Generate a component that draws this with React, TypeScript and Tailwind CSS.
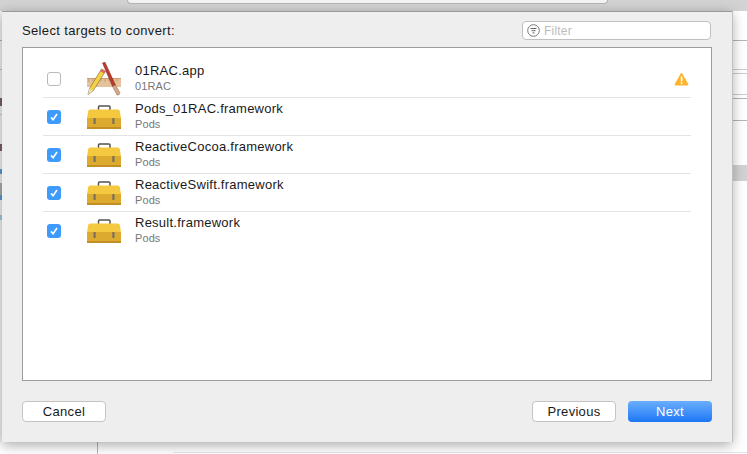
import React from 'react';

const targets = [
  { name: '01RAC.app', group: '01RAC', checked: false, app: true },
  { name: 'Pods_01RAC.framework', group: 'Pods', checked: true },
  { name: 'ReactiveCocoa.framework', group: 'Pods', checked: true },
  { name: 'ReactiveSwift.framework', group: 'Pods', checked: true },
  { name: 'Result.framework', group: 'Pods', checked: true },
];

// bits of the window behind the sheet, top to bottom
const leftEdge = [
  { h: 29, c: 'bg-transparent' }, { h: 1, c: 'bg-[#b5b5b5]' },
  { h: 28, c: 'bg-transparent' }, { h: 1, c: 'bg-[#c4c4c4]' },
  { h: 28, c: 'bg-transparent' }, { h: 8, c: 'bg-[#7d5f70]' },
  { h: 8, c: 'bg-transparent' }, { h: 1, c: 'bg-[#cccccc]' },
  { h: 29, c: 'bg-transparent' }, { h: 7, c: 'bg-[#7d5f70]' },
  { h: 18, c: 'bg-transparent' }, { h: 5, c: 'bg-[#5b9bd5]' },
  { h: 9, c: 'bg-transparent' }, { h: 12, c: 'bg-[#b0b0b0]' },
  { h: 5, c: 'bg-[#5b9bd5]' }, { h: 15, c: 'bg-transparent' },
  { h: 5, c: 'bg-[#a5cdec]' },
];

const rightEdge = [
  { h: 29, c: 'bg-transparent' }, { h: 1, c: 'bg-[#b5b5b5]' },
  { h: 28, c: 'bg-transparent' }, { h: 1, c: 'bg-[#cccccc]' },
  { h: 3, c: 'bg-transparent' }, { h: 1, c: 'bg-[#cccccc]' },
  { h: 20, c: 'bg-transparent' }, { h: 1, c: 'bg-[#cccccc]' },
  { h: 3, c: 'bg-transparent' }, { h: 1, c: 'bg-[#b5b5b5]' },
  { h: 21, c: 'bg-transparent' }, { h: 1, c: 'bg-[#b5b5b5]' },
  { h: 44, c: 'bg-transparent' }, { h: 16, c: 'bg-[#d2d2d2]' },
];

const AppIcon = () => (
  <svg width="34" height="34" viewBox="0 0 34 34" className="block">
    <rect x="0" y="16" width="34" height="9" fill="#e6c29b" />
    <rect x="0" y="16" width="34" height="1" fill="#c99e72" />
    <path d="M2 17v3M6 17v2M10 17v3M14 17v2M18 17v3M22 17v2M26 17v3M30 17v2" stroke="#b98a5c" strokeWidth="0.7" />
    <path d="M1 32.5 L2.5 26.5 L14.5 7 L18.5 9.3 L6 29 Z" fill="#f5d23e" stroke="#6f6149" strokeWidth="0.6" />
    <path d="M1 32.5 L2.5 26.5 L6 29 Z" fill="#eadcc0" />
    <path d="M14.5 7 L18.5 9.3 L17.2 11.5 L13.2 9.2 Z" fill="#e4666a" />
    <path d="M15.5 1 L18 0.3 L28.5 23 L25.5 24.5 Z" fill="#bb3b2f" stroke="#7d2a22" strokeWidth="0.5" />
    <path d="M25.5 24.5 L28.5 23 L33 31 Q32.5 33.5 30 33 Z" fill="#d8a688" stroke="#8a6a55" strokeWidth="0.5" />
  </svg>
);

const ToolboxIcon = () => (
  <svg width="34" height="24" viewBox="0 0 34 24" className="block">
    <path d="M11.5 5V2Q11.5 1 12.5 1H22Q23 1 23 2V5" fill="none" stroke="#55534e" strokeWidth="1.5" />
    <path d="M3 4.5H31Q33 4.5 33 7L34 13.5H0L1 7Q1 4.5 3 4.5Z" fill="#f4c93f" />
    <rect x="0" y="13" width="34" height="10" fill="#dcaa2e" />
    <rect x="0" y="22" width="34" height="2" fill="#c49026" />
    <rect x="6.5" y="13" width="2.2" height="6" rx="0.5" fill="#77705f" />
    <rect x="25.3" y="13" width="2.2" height="6" rx="0.5" fill="#77705f" />
  </svg>
);

const Checkbox = ({ checked }: { checked: boolean }) =>
  checked ? (
    <div className="w-[14px] h-[14px] mt-[1px] rounded-[3px] bg-[#3f9bfb] flex items-center justify-center">
      <svg width="10" height="10" viewBox="0 0 10 10">
        <path d="M2 5.4 L4.1 7.8 L8 2" fill="none" stroke="#fff" strokeWidth="1.6" />
      </svg>
    </div>
  ) : (
    <div className="w-[14px] h-[14px] mt-[1px] rounded-[3px] bg-white border border-[#b9b9b9]" />
  );

export default function App() {
  return (
    <div className="w-[747px] h-[454px] overflow-hidden bg-white flex flex-col font-['Liberation_Sans',sans-serif]">
      <div className="h-[11px] shrink-0 bg-[#d3d3d3] pl-[127px]">
        <div className="w-[481px] h-[4px] bg-[#f4f4f4] border-r border-b border-l border-[#b5b5b5] rounded-b-[4px]" />
      </div>
      <div className="h-[431px] shrink-0 flex">
        <div className="w-[2px] shrink-0 bg-[#f4f4f4] flex flex-col">
          {leftEdge.map((s, i) => (
            <div key={i} className={s.c} style={{ height: s.h }} />
          ))}
        </div>
        <div className="relative z-10 w-[730px] shrink-0 bg-[#eeeeee] border-t border-[#9a9a9a] shadow-[1px_0_0_#c0c0c0,0_3px_12px_rgba(0,0,0,0.35)] px-[20px] flex flex-col">
          <div className="h-[35px] pt-[2px] flex items-center justify-between">
            <span className="mt-[1px] text-[13px] tracking-[0.35px] text-[#1a1a1a]">Select targets to convert:</span>
            <div className="w-[189px] h-[19px] mr-[1px] bg-white border border-[#c0c0c0] rounded-[4px] flex items-center pl-[4px] gap-[4px]">
              <svg width="13" height="13" viewBox="0 0 13 13">
                <circle cx="6.5" cy="6.5" r="5.8" fill="none" stroke="#777" />
                <path d="M3.5 4.5H9.5M4.5 6.7H8.5M5.5 8.9H7.5" stroke="#666" />
              </svg>
              <span className="text-[12px] tracking-[0.2px] text-[#bcbcbc]">Filter</span>
            </div>
          </div>
          <div className="w-[690px] h-[334px] bg-white border border-[#9c9c9c] pt-[12px] pl-[20px] pr-[20px]">
            {targets.map((t, i) => (
              <div key={t.name} className={`h-[38px] pl-[4px] flex items-center border-b ${i < targets.length - 1 ? 'border-[#e3e3e3]' : 'border-transparent'}`}>
                <div className="w-[40px]"><Checkbox checked={t.checked} /></div>
                <div className={`w-[48px] ${t.app ? 'mt-[1px]' : ''}`}>
                  {t.app ? <AppIcon /> : <ToolboxIcon />}
                </div>
                <div className="flex-1 flex flex-col mb-[2px]">
                  <span className="text-[13px] leading-[16px] tracking-[0.25px] text-[#1a1a1a]">{t.name}</span>
                  <span className="text-[11px] leading-[14px] tracking-[0.1px] text-[#777]">{t.group}</span>
                </div>
                {t.app && (
                  <svg width="15" height="14" viewBox="0 0 15 14" className="mr-[2px]">
                    <path d="M7.5 1 L14 12.5 Q14 13 13.5 13 H1.5 Q1 13 1 12.5 Z" fill="#fdb52f" stroke="#fdb52f" strokeLinejoin="round" />
                    <rect x="6.8" y="4.5" width="1.6" height="5" fill="#fff" />
                    <rect x="6.8" y="10.3" width="1.6" height="1.6" fill="#fff" />
                  </svg>
                )}
              </div>
            ))}
          </div>
          <div className="flex-1 flex items-center justify-between">
            <button className="w-[84px] h-[21px] bg-white border border-[#c4c4c4] rounded-[4px] text-[13px] tracking-[0.3px] text-[#1a1a1a]">Cancel</button>
            <div className="flex gap-[12px]">
              <button className="w-[84px] h-[21px] bg-white border border-[#c4c4c4] rounded-[4px] text-[13px] tracking-[0.3px] text-[#1a1a1a]">Previous</button>
              <button className="w-[84px] h-[21px] rounded-[4px] text-[13px] tracking-[0.3px] text-white bg-gradient-to-b from-[#69aefc] to-[#1a76f5]">Next</button>
            </div>
          </div>
        </div>
        <div className="flex-1 flex flex-col">
          {rightEdge.map((s, i) => (
            <div key={i} className={s.c} style={{ height: s.h }} />
          ))}
        </div>
      </div>
      <div className="flex-1 flex">
        <div className="w-[98px] shrink-0 border-r border-[#b5b5b5]" />
        <div className="w-[634px] h-[11px] border-b border-[#e6e6e6] ml-[75px]" />
      </div>
    </div>
  );
}
